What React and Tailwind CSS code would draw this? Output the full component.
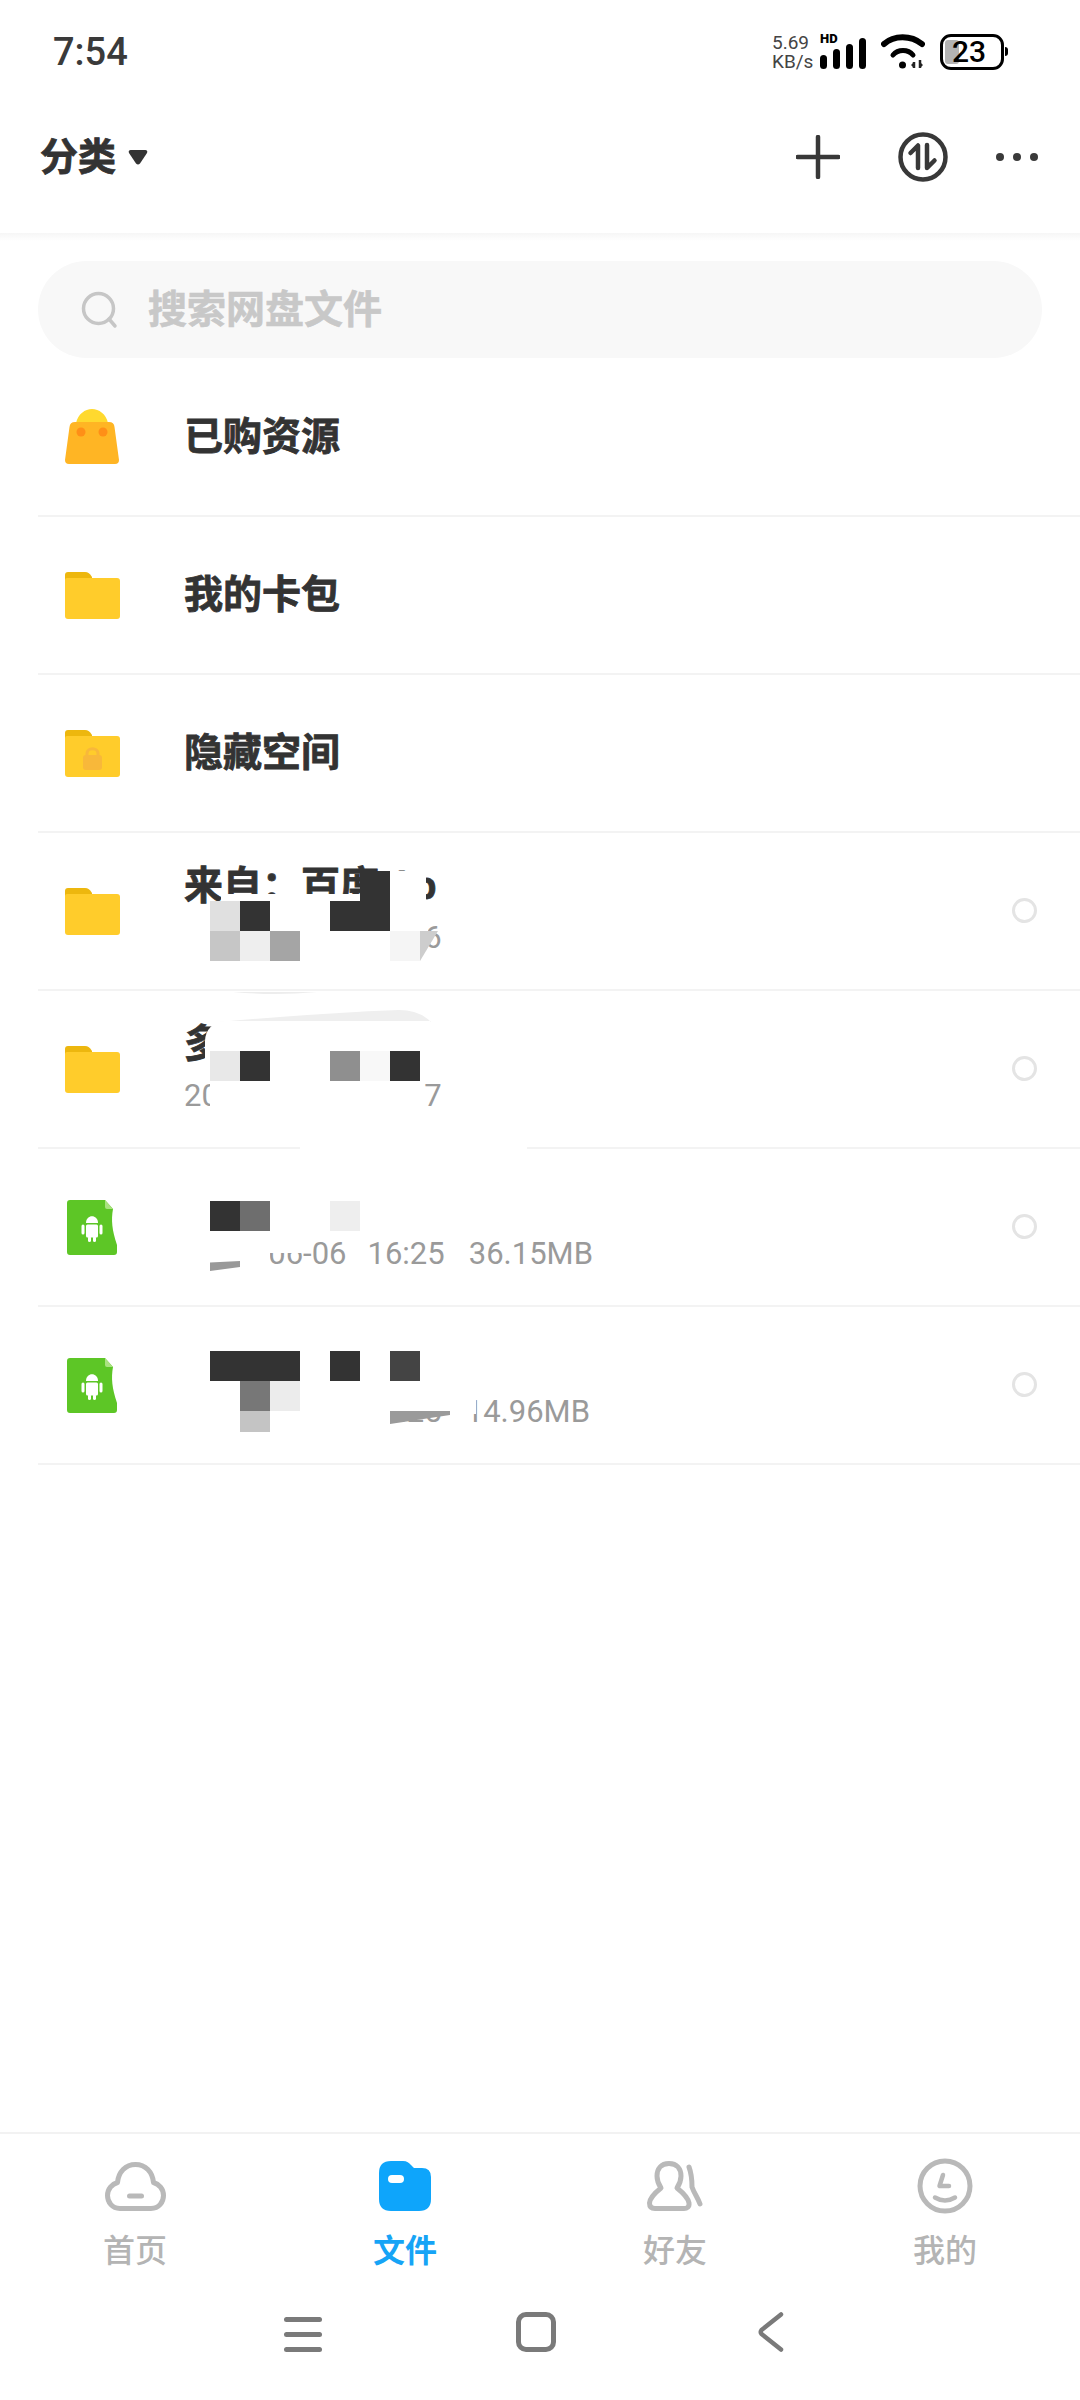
import React from "react";

const Folder = ({ lock }) => (
  <svg width="55" height="47" viewBox="0 0 55 47">
    <path d="M3 0H20C23 0 25 1.500 27 5V10H0V3Q0 0 3 0Z" fill="#edb70e" />
    <path d="M0 8Q0 6 2 6H52Q55 6 55 9V44Q55 47 52 47H3Q0 47 0 44Z" fill="#ffcc2b" />
    {lock && (
      <g>
        <path d="M22 26V23.500C22 17 33 17 33 23.500V26" fill="none" stroke="#f8b83a" strokeWidth="3" />
        <rect x="18" y="25" width="19" height="15" rx="3" fill="#f8b83a" />
      </g>
    )}
  </svg>
);

const Bag = () => (
  <svg width="54" height="56" viewBox="0 0 54 56">
    <path d="M11 14C13 5 20 0 27 0C34 0 41 5 43 14Z" fill="#ffd92e" />
    <path d="M10 13H44Q49 13 49.500 18L54 51Q54 55 50 55H4Q0 55 0 51L4.500 18Q5 13 10 13Z" fill="#ffb524" />
    <circle cx="16" cy="23" r="4.500" fill="#ff8f17" />
    <circle cx="38" cy="23" r="4.500" fill="#ff8f17" />
  </svg>
);

const Apk = () => (
  <svg width="50" height="55" viewBox="0 0 50 55">
    <path d="M3 0H38L46 9C44 20 45 30 50 45V52Q50 55 47 55H3Q0 55 0 52V3Q0 0 3 0Z" fill="#5dc626" />
    <path d="M38 0L46 9H40Q38 9 38 7Z" fill="#a9e280" />
    <path d="M19 23C19 14 31 14 31 23Z" fill="#fff" />
    <rect x="19" y="24.500" width="12" height="13" rx="1.500" fill="#fff" />
    <rect x="14.500" y="24.500" width="3" height="10" rx="1.500" fill="#fff" />
    <rect x="32.500" y="24.500" width="3" height="10" rx="1.500" fill="#fff" />
    <rect x="21" y="36" width="3" height="6" rx="1.500" fill="#fff" />
    <rect x="26" y="36" width="3" height="6" rx="1.500" fill="#fff" />
  </svg>
);

const Radio = () => (
  <div className="ml-auto mr-[43px] mb-[2px] h-[25px] w-[25px] rounded-full border-[3px] border-[#e4e4e4]" />
);

const Title = ({ children }) => (
  <div className="h-[50px] text-[39px] leading-[50px] font-bold text-[#333333] [-webkit-text-stroke:0.8px_#333333]">{children}</div>
);

const Sub = ({ children }) => (
  <div className="flex h-[50px] translate-y-[2px] gap-[24px] text-[31px] leading-[50px] text-[#9a9a9a]">{children}</div>
);

const Row = ({ icon, children, radio = true }) => (
  <div className="relative flex h-[158px] items-center border-b-2 border-[#f3f3f3]">
    <div className="mr-[38px] flex w-[108px] justify-center">{icon}</div>
    {children}
    {radio && <Radio />}
  </div>
);

const Cell = ({ c }) => <div className={c} />;

const Tab = ({ icon, label, active }) => (
  <div className="flex flex-col items-center">
    <div className="flex h-[60px] items-center">{icon}</div>
    <div className={active ? "mt-[13px] text-[32px] leading-[44px] font-bold text-[#16a4f6]" : "mt-[13px] text-[32px] leading-[44px] font-medium text-[#b4b4b4]"}>
      {label}
    </div>
  </div>
);

export default function App() {
  return (
    <div className="flex h-[2400px] w-[1080px] flex-col overflow-hidden bg-white font-['Roboto','Noto_Sans_CJK_SC',sans-serif]">
      {/* status bar */}
      <div className="flex h-[81px] shrink-0 items-center justify-between pt-[22px] pl-[53px] pr-[72px]">
        <div className="text-[38px] leading-[44px] font-medium text-[#3a3a3a]">7:54</div>
        <div className="flex items-center">
          <div className="w-[40px] text-[19px] leading-[19px] text-[#444444]">
            <div>5.69</div>
            <div>KB/s</div>
          </div>
          <div className="relative ml-[8px] flex h-[34px] w-[47px] items-end gap-[6px]">
            <div className="absolute left-0 top-[-2px] text-[13px] leading-[12px] font-black text-black">HD</div>
            <div className="h-[14px] w-[7px] rounded-full bg-black" />
            <div className="h-[20px] w-[7px] rounded-full bg-black" />
            <div className="h-[25px] w-[7px] rounded-full bg-black" />
            <div className="h-[31px] w-[7px] rounded-full bg-black" />
          </div>
          <svg className="ml-[14px]" width="44" height="35" viewBox="0 0 44 35">
            <path d="M3 10C13 1 30 1 41 10" fill="none" stroke="#000" strokeWidth="6" strokeLinecap="round" />
            <path d="M12 21C17 15 27 15 32 21" fill="none" stroke="#000" strokeWidth="5" strokeLinecap="round" />
            <circle cx="21.500" cy="31" r="3.500" fill="#000" />
            <path d="M33 28V34M39 26V34" stroke="#222" strokeWidth="2.500" />
            <path d="M30 31L33 28V34ZM42 31L39 34V28Z" fill="#222" />
          </svg>
          <div className="relative ml-[15px] flex h-[36px] w-[64px] items-center justify-center overflow-hidden rounded-[11px] border-[3px] border-black">
            <div className="absolute left-[2px] top-[3px] h-[24px] w-[14px] rounded-[3px] bg-[#b3b3b3]" />
            <div className="relative mr-[6px] text-[30px] leading-[30px] font-medium text-black">23</div>
          </div>
          <div className="ml-[1px] h-[9px] w-[3px] rounded-r-full bg-black" />
        </div>
      </div>

      {/* header */}
      <div className="flex h-[152px] shrink-0 items-center pl-[40px] pr-[42px]">
        <div className="text-[38px] font-bold leading-[50px] text-[#333333] [-webkit-text-stroke:0.8px_#333333]">分类</div>
        <svg className="ml-[12px]" width="20" height="15" viewBox="0 0 20 15">
          <path d="M2.500 0H17.500Q20 0 19 3L12 13.500Q10 15.500 8 13.500L1 3Q0 0 2.500 0Z" fill="#333" />
        </svg>
        <svg className="ml-auto" width="44" height="44" viewBox="0 0 44 44">
          <path d="M1.500 22H42.500M22 2V42" stroke="#383838" strokeWidth="4.500" strokeLinecap="round" />
        </svg>
        <svg className="ml-[58px]" width="50" height="50" viewBox="0 0 50 50">
          <circle cx="25" cy="25" r="22.500" fill="none" stroke="#383838" strokeWidth="4.500" />
          <path d="M12.500 21L20 13.500V36M29 13V36L36.500 28.500" fill="none" stroke="#383838" strokeWidth="4.500" strokeLinecap="round" strokeLinejoin="round" />
        </svg>
        <div className="ml-[48px] flex gap-[9px]">
          <div className="h-[8px] w-[8px] rounded-full bg-[#3a3a3a]" />
          <div className="h-[8px] w-[8px] rounded-full bg-[#3a3a3a]" />
          <div className="h-[8px] w-[8px] rounded-full bg-[#3a3a3a]" />
        </div>
      </div>
      <div className="h-[8px] shrink-0 bg-gradient-to-b from-[#f6f6f6] to-white" />

      {/* search */}
      <div className="mx-[38px] mt-[20px] flex h-[97px] shrink-0 items-center rounded-full bg-[#f8f8f8] pl-[43px]">
        <svg width="38" height="38" viewBox="0 0 38 38">
          <circle cx="17.500" cy="17.500" r="15" fill="none" stroke="#c6c6c6" strokeWidth="3.500" />
          <path d="M28 28L34 35" stroke="#c6c6c6" strokeWidth="3.500" strokeLinecap="round" />
        </svg>
        <div className="ml-[29px] text-[39px] font-bold leading-[50px] text-[#c8c8c8] [-webkit-text-stroke:0.6px_#c8c8c8]">搜索网盘文件</div>
      </div>

      {/* list */}
      <div className="ml-[38px] mt-[1px] flex-1">
        <Row icon={<Bag />} radio={false}>
          <Title>已购资源</Title>
        </Row>
        <Row icon={<Folder />} radio={false}>
          <Title>我的卡包</Title>
        </Row>
        <Row icon={<Folder lock />} radio={false}>
          <Title>隐藏空间</Title>
        </Row>

        <Row icon={<Folder />}>
          <div>
            <Title>来自：百度 Ap</Title>
            <Sub>
              <span>2023-06-06</span>
              <span>16:26</span>
            </Sub>
          </div>
          <div className="absolute left-[183px] top-[61px] h-[40px] w-[204px] bg-white" />
          <div className="absolute left-[142px] top-[93px] h-[42px] w-[248px] bg-white" />
          <div className="absolute left-[382px] top-[38px] h-[30px] w-[6px] bg-white" />
          <div className="absolute left-[172px] top-[38px] grid grid-cols-[repeat(7,30px)] grid-rows-[repeat(3,30px)]">
            {["", "", "", "", "", "bg-[#333333]", "bg-white",
              "bg-[#e0e0e0]", "bg-[#333333]", "bg-white", "bg-white", "bg-[#333333]", "bg-[#333333]", "bg-white",
              "bg-[#c6c6c6]", "bg-[#eeeeee]", "bg-[#a5a5a5]", "bg-white", "bg-white", "bg-white", "bg-[#f5f5f5]"].map((c, i) => (
              <Cell key={i} c={c} />
            ))}
          </div>
          <svg className="absolute left-[382px] top-[98px]" width="18" height="30" viewBox="0 0 18 30">
            <path d="M0 0H18L0 30Z" fill="#cdcdcd" />
          </svg>
        </Row>

        <Row icon={<Folder />}>
          <div>
            <Title>多</Title>
            <Sub>
              <span>2023-06-06</span>
              <span>16:27</span>
            </Sub>
          </div>
          <svg className="absolute left-[195px] top-[1px]" width="84" height="3" viewBox="0 0 84 3">
            <path d="M0 0H84Q42 4 0 0Z" fill="#ededed" />
          </svg>
          <svg className="absolute left-[181px] top-[19px]" width="212" height="12" viewBox="0 0 212 12">
            <path d="M0 12Q100 3 180 0Q200 0 212 12Z" fill="#efefef" />
          </svg>
          <div className="absolute left-[167px] top-[30px] h-[60px] w-[225px] rounded-tl-[20px] bg-white" />
          <div className="absolute left-[172px] top-[90px] h-[30px] w-[214px] bg-white" />
          <div className="absolute left-[262px] top-[154px] h-[5px] w-[227px] bg-white" />
          <div className="absolute left-[172px] top-[60px] grid grid-cols-[repeat(7,30px)] grid-rows-[30px]">
            {["bg-[#e8e8e8]", "bg-[#333333]", "bg-white", "bg-white", "bg-[#8f8f8f]", "bg-[#f8f8f8]", "bg-[#333333]"].map((c, i) => (
              <Cell key={i} c={c} />
            ))}
          </div>
        </Row>

        <Row icon={<Apk />}>
          <div>
            <Title>&nbsp;</Title>
            <Sub>
              <span className="ml-[6px] mr-[-3px]">2023-06-06</span>
              <span>16:25</span>
              <span>36.15MB</span>
            </Sub>
          </div>
          <div className="absolute left-[142px] top-[82px] h-[50px] w-[90px] bg-white" />
          <div className="absolute left-[232px] top-[82px] h-[22px] w-[38px] bg-white" />
          <div className="absolute left-[172px] top-[52px] grid grid-cols-[repeat(5,30px)] grid-rows-[30px]">
            {["bg-[#333333]", "bg-[#6e6e6e]", "bg-white", "bg-white", "bg-[#eeeeee]"].map((c, i) => (
              <Cell key={i} c={c} />
            ))}
          </div>
          <svg className="absolute left-[172px] top-[112px]" width="30" height="10" viewBox="0 0 30 10">
            <path d="M0 1.500L30 0V6L0 10Z" fill="#999999" />
          </svg>
        </Row>

        <Row icon={<Apk />}>
          <div>
            <Title>&nbsp;</Title>
            <Sub>
              <span>2023-06-06</span>
              <span>16:25</span>
              <span>14.96MB</span>
            </Sub>
          </div>
          <div className="absolute left-[142px] top-[89px] h-[40px] w-[210px] bg-white" />
          <div className="absolute left-[352px] top-[89px] h-[18px] w-[86px] bg-white" />
          <div className="absolute left-[172px] top-[44px] grid grid-cols-[repeat(7,30px)] grid-rows-[30px_30px_21px]">
            {["bg-[#333333]", "bg-[#333333]", "bg-[#333333]", "", "bg-[#333333]", "", "bg-[#444444]",
              "", "bg-[#777777]", "bg-[#ececec]", "", "", "", "",
              "", "bg-[#c4c4c4]", "", "", "", "", ""].map((c, i) => (
              <Cell key={i} c={c} />
            ))}
          </div>
          <svg className="absolute left-[352px] top-[104px]" width="60" height="13" viewBox="0 0 60 13">
            <path d="M0 0H60V4L0 13Z" fill="#9a9a9a" />
          </svg>
        </Row>
      </div>

      {/* tab bar */}
      <div className="grid h-[176px] shrink-0 grid-cols-4 border-t-2 border-[#f2f2f2] pt-[22px]">
        <Tab
          label="首页"
          icon={
            <svg width="61" height="49" viewBox="0 0 61 49">
              <path d="M15 46.500C7 46.500 2.500 40 2.500 33.500C2.500 27 7 22 12.500 20.500C13.500 10 20.500 2.500 30.500 2.500C40.500 2.500 47.500 10 48.500 20.500C54 22 58.500 27 58.500 33.500C58.500 40 54 46.500 46 46.500Z" fill="none" stroke="#b9b9b9" strokeWidth="5" strokeLinejoin="round" />
              <path d="M24.500 34H36.500" stroke="#b9b9b9" strokeWidth="5" strokeLinecap="round" />
            </svg>
          }
        />
        <Tab
          active
          label="文件"
          icon={
            <svg width="52" height="50" viewBox="0 0 52 50">
              <path d="M12 0H24C28 0 30 2 32 4L35 7H43Q52 7 52 16V38Q52 50 40 50H12Q0 50 0 38V12Q0 0 12 0Z" fill="#0ea5fb" />
              <rect x="9" y="14" width="16" height="8" rx="4" fill="#fff" />
            </svg>
          }
        />
        <Tab
          label="好友"
          icon={
            <svg width="56" height="50" viewBox="0 0 56 50">
              <path d="M22 2.500C14 2.500 10 8 10 15C10 20 12 24 14 27C9 31 3 36 2.500 42C2.500 46 5 47.500 8 47.500H37C40 47.500 42.500 46 42 42C41 36 35 31 30 27C32 24 34 20 34 15C34 8 30 2.500 22 2.500Z" fill="none" stroke="#b9b9b9" strokeWidth="5" strokeLinejoin="round" />
              <path d="M42 6C45 14 45 22 45 26C47 32 51 37 53 43" fill="none" stroke="#b9b9b9" strokeWidth="5" strokeLinecap="round" />
            </svg>
          }
        />
        <Tab
          label="我的"
          icon={
            <svg width="56" height="56" viewBox="0 0 56 56">
              <circle cx="28" cy="28" r="25" fill="none" stroke="#b9b9b9" strokeWidth="5" />
              <path d="M26 17L22.500 28H32" fill="none" stroke="#b9b9b9" strokeWidth="4.500" strokeLinecap="round" strokeLinejoin="round" />
              <path d="M18 39.500Q28 45.500 38 39.500" fill="none" stroke="#b9b9b9" strokeWidth="4.500" strokeLinecap="round" />
            </svg>
          }
        />
      </div>

      {/* navigation bar */}
      <div className="flex h-[92px] shrink-0 items-start pt-[4px] pl-[284px]">
        <div className="mt-[5px] flex w-[38px] flex-col gap-[10px]">
          <div className="h-[5px] rounded-full bg-[#7a7a7a]" />
          <div className="h-[5px] rounded-full bg-[#7a7a7a]" />
          <div className="h-[5px] rounded-full bg-[#7a7a7a]" />
        </div>
        <div className="ml-[194px] h-[40px] w-[40px] rounded-[10px] border-[5px] border-[#7a7a7a]" />
        <svg className="ml-[202px]" width="26" height="40" viewBox="0 0 26 40">
          <path d="M23 2.500L3.500 18Q2 20 3.500 22L23 37.500" fill="none" stroke="#7a7a7a" strokeWidth="4.500" strokeLinecap="round" />
        </svg>
      </div>
    </div>
  );
}
